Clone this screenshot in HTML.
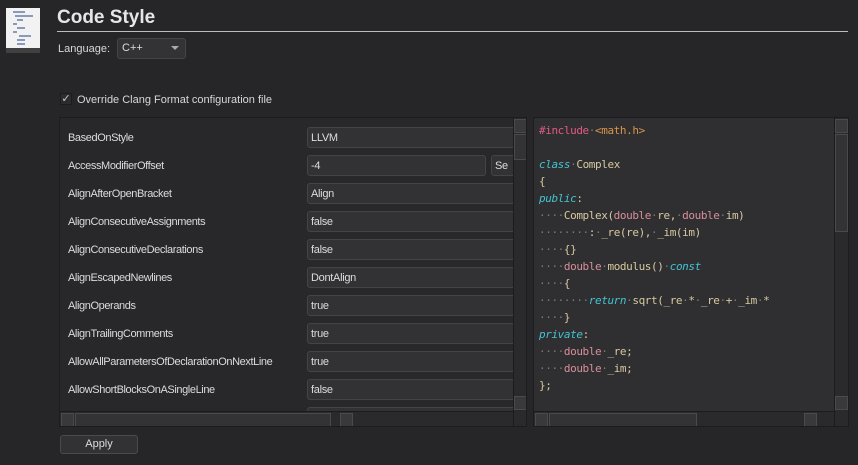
<!DOCTYPE html>
<html><head><meta charset="utf-8"><style>
*{margin:0;padding:0;box-sizing:border-box}
body{width:858px;height:465px;background:#262628;font-family:"Liberation Sans",sans-serif;color:#d8d8d8;position:relative;overflow:hidden;font-size:11px}
.abs{position:absolute}
.title{left:57px;top:7px;font-size:19px;font-weight:bold;color:#e6e6e6}
.hr{left:57px;top:31px;width:791px;height:1px;background:#bdbdbd}
.combo{background:#333335;border:1px solid #454547;border-radius:3px;height:21px;padding:3px 4px;color:#ddd;font-size:11px}
.lp{left:59px;top:117px;width:468px;height:310px;background:#28282a;border:1px solid #1c1c1e;overflow:hidden}
.lbl{position:absolute;left:8px;font-size:11px;letter-spacing:-0.4px;color:#dcdcdc}
.fld{position:absolute;left:247px;width:230px;height:21px;background:#323234;border:1px solid #444;border-radius:3px;padding:4px 3px;font-size:11px;color:#ddd;letter-spacing:-0.3px}
.vs{background:#2a2a2c;border-left:1px solid #1c1c1e}
.btnsb{position:absolute;width:13px;height:14px;background:#39393b;border:1px solid #4a4a4c}
.cp{left:533px;top:117px;width:316px;height:310px;background:#2f2f31;border:1px solid #1c1c1e;overflow:hidden}
pre{font-family:"DejaVu Sans Mono",monospace;font-size:11px;letter-spacing:-0.4px;line-height:17px;color:#d7c9a0;position:absolute;left:5px;top:4px}
.d{color:#7a7a7a}.k{color:#45c3d3;font-style:italic}.t{color:#d88f9a}.p{color:#e05a82}.o{color:#d8954a}
</style></head><body>
<svg class="abs" style="left:5px;top:7px" width="36" height="46"><rect x="1" y="1" width="34" height="40" fill="#f2f2f2"/><rect x="1" y="41" width="34" height="5" fill="#5a5a5a" opacity=".5"/><g stroke="#27408b" stroke-width="1"><line x1="8" y1="5" x2="20" y2="5"/><line x1="10" y1="9" x2="28" y2="9"/><line x1="12" y1="13" x2="18" y2="13"/><line x1="8" y1="17" x2="12" y2="17"/><line x1="12" y1="21" x2="20" y2="21"/><line x1="8" y1="25" x2="12" y2="25"/><line x1="14" y1="29" x2="26" y2="29"/><line x1="12" y1="33" x2="20" y2="33"/><line x1="12" y1="37" x2="20" y2="37"/></g></svg>
<div class="abs title">Code Style</div>
<div class="abs hr"></div>
<div class="abs" style="left:58px;top:43px">Language:</div>
<div class="abs combo" style="left:117px;top:38px;width:69px">C++<span style="position:absolute;right:6px;top:7px;border:4px solid transparent;border-top:4px solid #aaa"></span></div>
<div class="abs" style="left:60px;top:93px;width:12px;height:12px;background:#2c2c2e;border:1px solid #1c1c1e;color:#ccc;font-size:11px;line-height:11px;text-align:center">✓</div>
<div class="abs" style="left:77px;top:94px">Override Clang Format configuration file</div>
<div class="abs lp">
<div class="lbl" style="top:14px">BasedOnStyle</div><div class="fld" style="top:9px">LLVM</div>
<div class="lbl" style="top:42px">AccessModifierOffset</div><div class="fld" style="top:37px;width:179px">-4</div><div class="fld" style="top:37px;left:431px;width:40px">Se</div>
<div class="lbl" style="top:70px">AlignAfterOpenBracket</div><div class="fld" style="top:65px">Align</div>
<div class="lbl" style="top:98px">AlignConsecutiveAssignments</div><div class="fld" style="top:93px">false</div>
<div class="lbl" style="top:126px">AlignConsecutiveDeclarations</div><div class="fld" style="top:121px">false</div>
<div class="lbl" style="top:154px">AlignEscapedNewlines</div><div class="fld" style="top:149px">DontAlign</div>
<div class="lbl" style="top:182px">AlignOperands</div><div class="fld" style="top:177px">true</div>
<div class="lbl" style="top:210px">AlignTrailingComments</div><div class="fld" style="top:205px">true</div>
<div class="lbl" style="top:238px">AllowAllParametersOfDeclarationOnNextLine</div><div class="fld" style="top:233px">true</div>
<div class="lbl" style="top:266px">AllowShortBlocksOnASingleLine</div><div class="fld" style="top:261px">false</div>
<div class="fld" style="top:289px"></div>
<div class="vs" style="position:absolute;left:453px;top:0;width:15px;height:310px"></div>
<div class="btnsb" style="left:454px;top:1px"></div>
<div class="btnsb" style="left:454px;top:16px;height:26px;background:#333335"></div>
<div class="btnsb" style="left:454px;top:278px"></div>
<div style="position:absolute;left:0;top:293px;width:453px;height:16px;background:#2a2a2c;border-top:1px solid #1c1c1e"></div>
<div class="btnsb" style="left:1px;top:295px"></div>
<div class="btnsb" style="left:15px;top:295px;width:256px;background:#333335"></div>
<div class="btnsb" style="left:280px;top:295px"></div>
</div>
<div class="abs cp">
<pre><span class="p">#include</span><span class="d">·</span><span class="o">&lt;math.h&gt;</span>

<span class="k">class</span><span class="d">·</span>Complex
{
<span class="k">public</span>:
<span class="d">····</span>Complex(<span class="t">double</span><span class="d">·</span>re,<span class="d">·</span><span class="t">double</span><span class="d">·</span>im)
<span class="d">········</span>:<span class="d">·</span>_re(re),<span class="d">·</span>_im(im)
<span class="d">····</span>{}
<span class="d">····</span><span class="t">double</span><span class="d">·</span>modulus()<span class="d">·</span><span class="k">const</span>
<span class="d">····</span>{
<span class="d">········</span><span class="k">return</span><span class="d">·</span>sqrt(_re<span class="d">·</span>*<span class="d">·</span>_re<span class="d">·</span>+<span class="d">·</span>_im<span class="d">·</span>*
<span class="d">····</span>}
<span class="k">private</span>:
<span class="d">····</span><span class="t">double</span><span class="d">·</span>_re;
<span class="d">····</span><span class="t">double</span><span class="d">·</span>_im;
};</pre>
<div class="vs" style="position:absolute;left:300px;top:0;width:15px;height:310px"></div>
<div class="btnsb" style="left:301px;top:1px"></div>
<div class="btnsb" style="left:301px;top:16px;height:98px;background:#333335"></div>
<div class="btnsb" style="left:301px;top:278px"></div>
<div style="position:absolute;left:0;top:293px;width:300px;height:16px;background:#2a2a2c;border-top:1px solid #1c1c1e"></div>
<div class="btnsb" style="left:1px;top:295px"></div>
<div class="btnsb" style="left:15px;top:295px;width:148px;background:#333335"></div>
<div class="btnsb" style="left:270px;top:295px"></div>
</div>
<div class="abs" style="left:60px;top:435px;width:78px;height:19px;background:#323234;border:1px solid #4a4a4c;border-radius:3px;text-align:center;line-height:17px;color:#ddd">Apply</div>
</body></html>
